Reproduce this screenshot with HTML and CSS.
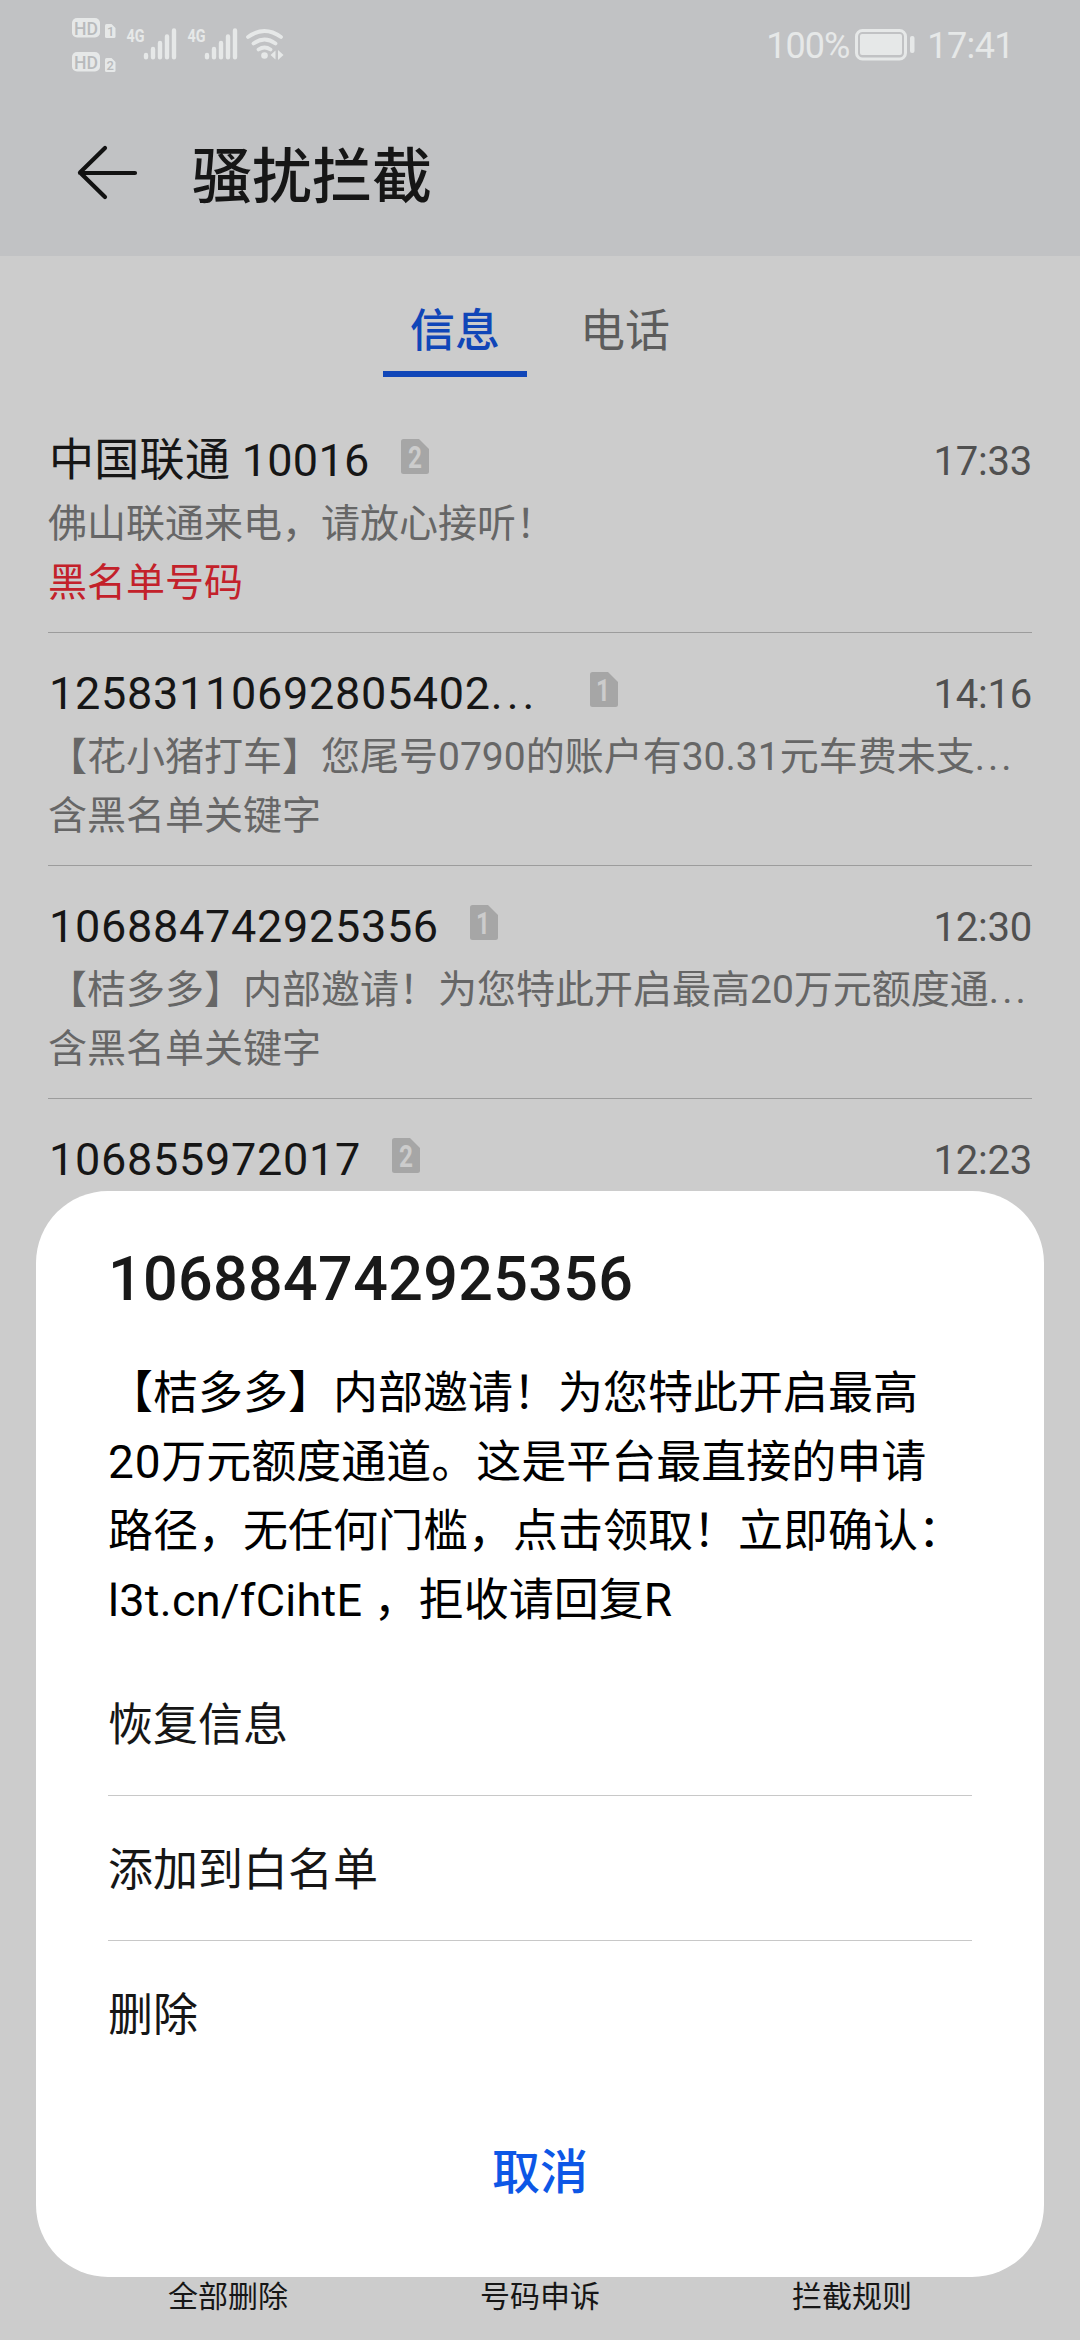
FILE: index.html
```html
<!DOCTYPE html>
<html lang="zh-CN">
<head>
<meta charset="utf-8">
<title>骚扰拦截</title>
<link rel="stylesheet" href="styles.css">
</head>
<body>
<div class="screen">
  <header class="header">
    <div class="status">
      <svg class="status-icons" width="216" height="66" viewBox="70 12 216 66">
        <g class="light">
          <rect x="72" y="18" width="28" height="19.5" rx="5"/>
          <path d="M105 25.5q0-1.5 1.500-1.500h5l4 4v8.500q0 1.500-1.500 1.500h-7.500q-1.500 0-1.500-1.500z"/>
          <rect x="72" y="52" width="28" height="19.500" rx="5"/>
          <path d="M105 59.500q0-1.500 1.500-1.500h5l4 4v8.500q0 1.500-1.500 1.500h-7.500q-1.500 0-1.500-1.500z"/>
        </g>
        <g class="knock">
          <text x="74" y="34.500" font-size="19" textLength="24" lengthAdjust="spacingAndGlyphs">HD</text>
          <text x="74" y="68.500" font-size="19" textLength="24" lengthAdjust="spacingAndGlyphs">HD</text>
          <text x="107" y="36" font-size="13">1</text>
          <text x="106.500" y="70" font-size="13">2</text>
        </g>
        <g class="net">
          <text x="126.500" y="42" font-size="19" textLength="18" lengthAdjust="spacingAndGlyphs">4G</text>
          <text x="187.500" y="42" font-size="19" textLength="18" lengthAdjust="spacingAndGlyphs">4G</text>
        </g>
        <g class="bars">
          <path d="M146 55v2.300M153 49v8.300M160 43v14.300M167 36.500v20.800M174 30.500v26.800"/>
          <path d="M207 55v2.300M214 49v8.300M221 43v14.300M228 36.500v20.800M235 30.500v26.800"/>
        </g>
        <g class="waves">
          <path d="M248 37q16.500-12 33 0M253.500 43.500q11-8 22 0M258.500 49.500q6-4 12 0"/>
        </g>
        <g class="light">
          <circle cx="264.500" cy="55.500" r="3.300"/>
          <path d="M270.500 55l5-4.500v9zM278 50l5.500 5-5.500 5z"/>
        </g>
      </svg>
      <div class="status-right">
        <span class="battery-level">100%</span>
        <svg width="62" height="34" viewBox="855 28 62 34">
          <rect class="battery-shell" x="857.500" y="30.500" width="49" height="28.500" rx="6"/>
          <rect class="light" x="861" y="34" width="42" height="21" rx="2"/>
          <rect class="light" x="911" y="36" width="4.500" height="17" rx="2"/>
        </svg>
        <span class="clock">17:41</span>
      </div>
    </div>
    <div class="titlebar">
      <svg class="back" width="62" height="58" viewBox="0 0 62 58"><path d="M28 4L3 28.500 28 53M3 29H58"/></svg>
      <h1 class="title">骚扰拦截</h1>
    </div>
  </header>

  <nav class="tabs">
    <div class="tab active">信息</div>
    <div class="tab">电话</div>
  </nav>

  <main class="list">
    <article class="item">
      <div class="line">
        <span class="name contact">中国联通 10016</span>
        <svg class="sim" width="28" height="35" viewBox="0 0 28 35"><path d="M0 2.500Q0 0 2.500 0H18L28 10V32.500Q28 35 25.500 35H2.500Q0 35 0 32.500Z"/><text x="7" y="29" textLength="14" lengthAdjust="spacingAndGlyphs">2</text></svg>
        <time class="time">17:33</time>
      </div>
      <p class="preview">佛山联通来电，请放心接听！</p>
      <p class="reason blocked">黑名单号码</p>
    </article>
    <article class="item">
      <div class="line">
        <span class="name long">12583110692805402<span class="dots">...</span></span>
        <svg class="sim" width="28" height="35" viewBox="0 0 28 35"><path d="M0 2.500Q0 0 2.500 0H18L28 10V32.500Q28 35 25.500 35H2.500Q0 35 0 32.500Z"/><text x="6" y="29" textLength="14" lengthAdjust="spacingAndGlyphs">1</text></svg>
        <time class="time">14:16</time>
      </div>
      <p class="preview">【花小猪打车】您尾号0790的账户有30.31元车费未支<span class="dots">...</span></p>
      <p class="reason">含黑名单关键字</p>
    </article>
    <article class="item">
      <div class="line">
        <span class="name">106884742925356</span>
        <svg class="sim" width="28" height="35" viewBox="0 0 28 35"><path d="M0 2.500Q0 0 2.500 0H18L28 10V32.500Q28 35 25.500 35H2.500Q0 35 0 32.500Z"/><text x="6" y="29" textLength="14" lengthAdjust="spacingAndGlyphs">1</text></svg>
        <time class="time">12:30</time>
      </div>
      <p class="preview">【桔多多】内部邀请！为您特此开启最高20万元额度通<span class="dots">...</span></p>
      <p class="reason">含黑名单关键字</p>
    </article>
    <article class="item">
      <div class="line">
        <span class="name">106855972017</span>
        <svg class="sim" width="28" height="35" viewBox="0 0 28 35"><path d="M0 2.500Q0 0 2.500 0H18L28 10V32.500Q28 35 25.500 35H2.500Q0 35 0 32.500Z"/><text x="7" y="29" textLength="14" lengthAdjust="spacingAndGlyphs">2</text></svg>
        <time class="time">12:23</time>
      </div>
    </article>
  </main>

  <footer class="toolbar">
    <span>全部删除</span>
    <span>号码申诉</span>
    <span>拦截规则</span>
  </footer>

  <section class="sheet">
    <h2 class="sheet-title">106884742925356</h2>
    <p class="message">【桔多多】内部邀请！为您特此开启最高<br><span class="amount">20</span>万元额度通道。这是平台最直接的申请<br>路径，无任何门槛，点击领取！立即确认：<br><span class="link">l3t.cn/fCihtE </span>，拒收请回复<span class="amount">R</span></p>
    <ul class="actions">
      <li>恢复信息</li>
      <li>添加到白名单</li>
      <li>删除</li>
    </ul>
    <button class="cancel">取消</button>
  </section>
</div>
</body>
</html>
```
FILE: styles.css
```css
* { box-sizing: border-box; margin: 0; padding: 0; }

body {
  font-family: Roboto, "Noto Sans CJK SC", sans-serif;
  font-weight: 400;
  color: #161616;
}

.screen {
  position: relative;
  width: 1080px;
  height: 2340px;
  overflow: hidden;
  background: #ccc;
  display: flex;
  flex-direction: column;
}

/* header */
.header { height: 256px; background: #c1c2c4; }
.status {
  height: 90px;
  padding: 12px 66px 0 70px;
  display: flex;
  justify-content: space-between;
  align-items: flex-start;
}
.light { fill: #e6e8e8; }
.knock { fill: #b8babc; font-weight: 500; }
.net { fill: #e6e8e8; font-weight: 700; }
.bars { stroke: #e6e8e8; stroke-width: 4.4; stroke-linecap: round; }
.waves { fill: none; stroke: #e6e8e8; stroke-width: 3.8; stroke-linecap: round; }
.battery-shell { fill: none; stroke: #e6e8e8; stroke-width: 3; }
.status-right {
  height: 66px;
  display: flex;
  align-items: center;
  color: #e6e8e8;
  font-size: 36px;
  line-height: 40px;
}
.battery-level { letter-spacing: -1px; margin: 2px 5px 0 0; }
.clock { margin: 2px 0 0 11px; letter-spacing: -0.6px; }

.titlebar {
  height: 166px;
  padding-left: 77px;
  display: flex;
  align-items: center;
}
.back { fill: none; stroke: #121212; stroke-width: 4.2; stroke-linecap: round; stroke-linejoin: round; }
.title { margin: 9px 0 0 53px; font-size: 60px; font-weight: 500; line-height: 80px; }

/* tabs */
.tabs {
  height: 144px;
  padding-top: 36px;
  display: flex;
  justify-content: center;
  gap: 26px;
}
.tab {
  width: 144px;
  height: 85px;
  line-height: 79px;
  text-align: center;
  font-size: 45px;
  color: #5c5c5c;
}
.tab.active { color: #1046b8; font-weight: 500; border-bottom: 6px solid #1046b8; }

/* blocked message list */
.list { flex: 1; padding: 0 48px; overflow: hidden; }
.item { height: 233px; padding-top: 28px; border-bottom: 1px solid #9c9c9c; }
.line { height: 66px; display: flex; align-items: center; padding-left: 1px; }
.name { font-size: 45px; line-height: 66px; letter-spacing: 0.7px; white-space: nowrap; }
.name.contact { letter-spacing: 0.3px; }
.name.long { width: 510px; }
.name .dots { letter-spacing: 4px; }
.sim { margin: -9px 0 0 31px; fill: #a6a6a6; overflow: visible; }
.sim text { fill: #ccc; font-size: 31px; font-weight: 700; }
.time { margin-left: auto; font-size: 40px; letter-spacing: -0.2px; color: #505050; }
.preview, .reason { font-size: 39px; height: 59px; line-height: 60px; color: #666; white-space: nowrap; }
.preview .dots { letter-spacing: 3px; }
.blocked { color: #c3212a; }

/* bottom toolbar */
.toolbar {
  height: 72px;
  padding: 0 72px;
  display: grid;
  grid-template-columns: repeat(3, 1fr);
  text-align: center;
  font-size: 30px;
  line-height: 58px;
}

/* action sheet over the list */
.sheet {
  position: absolute;
  left: 36px;
  top: 1191px;
  width: 1008px;
  height: 1086px;
  padding: 43px 72px 0;
  border-radius: 72px;
  background: #fff;
  display: flex;
  flex-direction: column;
}
.sheet-title { font-size: 61px; font-weight: 500; letter-spacing: 0.35px; line-height: 90px; color: #191919; }
.message { margin-top: 35px; font-size: 45px; line-height: 69px; color: #000; white-space: nowrap; }
.amount { letter-spacing: 0.8px; font-size: 46px; line-height: 1; }
.link { letter-spacing: 0.28px; }
.actions { list-style: none; margin-top: 16px; }
.actions li { height: 145px; line-height: 150px; font-size: 45px; border-bottom: 1px solid #c8c8c8; }
.actions li:last-child { border-bottom: 0; }
.cancel {
  border: 0;
  background: none;
  font: 500 48px/80px Roboto, "Noto Sans CJK SC", sans-serif;
  color: #0d57e6;
  margin-top: 47px;
}
```
